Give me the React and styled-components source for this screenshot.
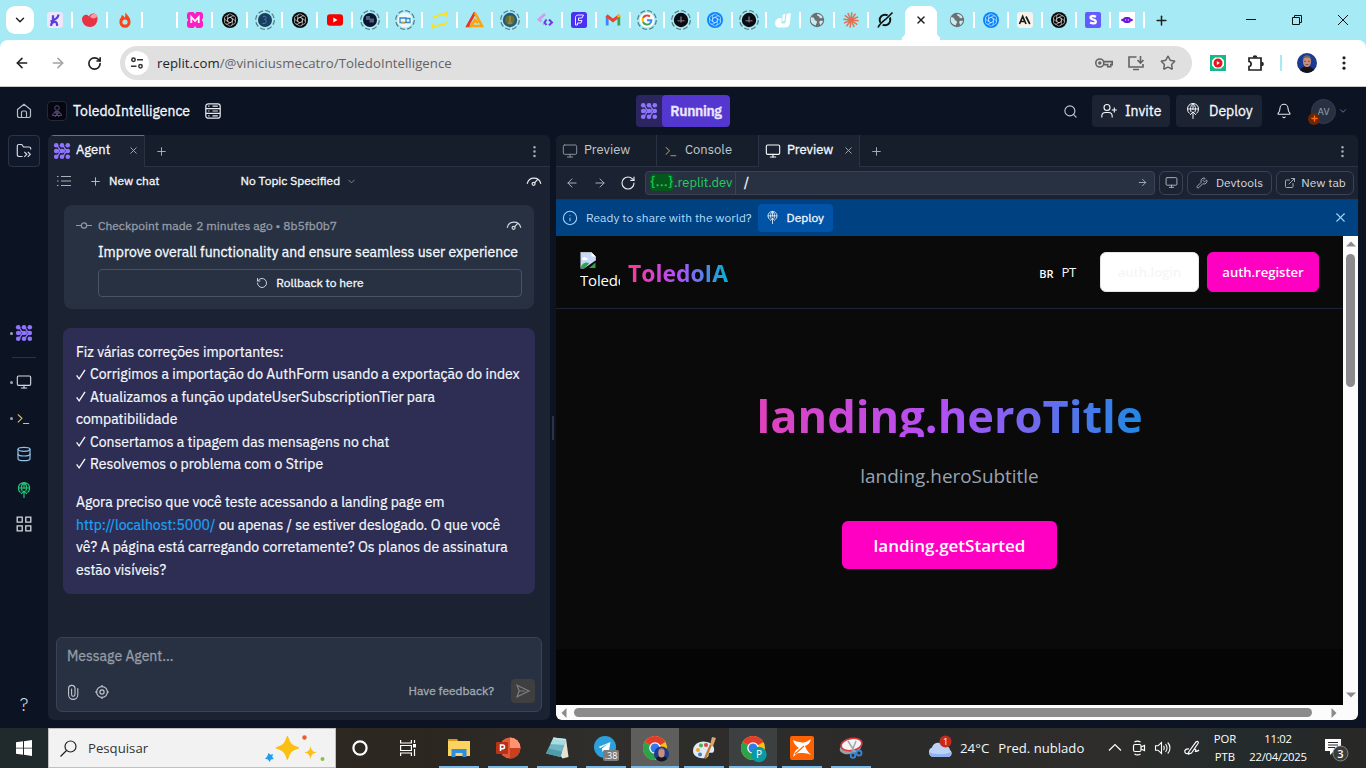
import React from "react";
import styled, { createGlobalStyle, css } from "styled-components";
import {
  ArrowLeft, ArrowRight, RotateCw, RotateCcw, Bell, Search, Monitor, Plus, X, ChevronDown,
  Wrench, ExternalLink, Info, EllipsisVertical, Star, Database,
} from "lucide-react";

const Global = createGlobalStyle`
  * { box-sizing: border-box; }
  body { margin: 0; background: #0c1424; }
  button { font: inherit; color: inherit; border: 0; background: none; padding: 0; margin: 0; }
`;

const plex = css`font-family: "IBM Plex Sans", Roboto, sans-serif;`;
const segoe = css`font-family: "Open Sans", "Noto Sans", sans-serif;`;

const Screen = styled.div`
  width: 1366px; height: 768px; display: flex; flex-direction: column; overflow: hidden;
  background: #0c1424; ${segoe}
`;
const Text = styled.span`
  font-size: ${p => p.$size || 14}px; font-weight: ${p => p.$weight || 400};
  color: ${p => p.$color || "#f5f9fc"}; letter-spacing: ${p => p.$ls || 0}px; white-space: pre;
  ${p => p.$firm && css`-webkit-text-stroke: 0.3px currentColor;`}
`;
const Cell = styled.div`
  flex: none; display: flex; align-items: center; justify-content: center;
  width: ${p => p.$w}px; height: ${p => p.$h || p.$w}px; color: ${p => p.$color || "inherit"};
`;
const Gap = styled.div`flex: none; width: ${p => p.$w}px;`;
const Spacer = styled.div`flex: 1;`;

/* ---------- browser tab strip ---------- */
const TabStrip = styled.header`
  height: 40px; flex: none; display: flex; align-items: center; background: #a5eaf5; padding-left: 6px;
`;
const TabSearch = styled.button`
  width: 28px; height: 28px; margin-right: 4px; border-radius: 9px; background: #fff;
  display: flex; align-items: center; justify-content: center;
`;
const Tab = styled.div`
  width: ${p => p.$w || 34}px; height: 16px; display: flex; align-items: center; justify-content: center; flex: none;
  border-right: 2px solid ${p => (p.$last ? "transparent" : "#fff")};
`;
const ActiveTab = styled.div`
  width: 38px; height: 34px; align-self: flex-end; display: flex; justify-content: center; align-items: flex-start;
  padding-top: 6px; flex: none; margin-left: -1px; margin-right: 1px;
  background:
    radial-gradient(circle at 0 0, transparent 9.5px, #fff 10px) -6px 100% / 10px 10px no-repeat,
    radial-gradient(circle at 100% 0, transparent 9.5px, #fff 10px) calc(100% + 6px) 100% / 10px 10px no-repeat,
    linear-gradient(#fff, #fff) 50% 10px / 32px 24px no-repeat,
    linear-gradient(#fff, #fff) 50% 0 / 14px 12px no-repeat,
    radial-gradient(circle at 12px 9px, #fff 9px, transparent 9.5px),
    radial-gradient(circle at 26px 9px, #fff 9px, transparent 9.5px);
`;
const Favicon = styled.svg.attrs({ viewBox: "0 0 20 20", fill: "none" })`
  width: 20px; height: 20px; flex: none; display: block; overflow: visible;
`;

const Knot = ({ bg }) => (
  <Favicon>
    <circle cx="10" cy="10" r="8" fill={bg} />
    <g stroke="#fff" strokeWidth=".65" opacity=".8">
      {[0, 60, 120, 180, 240, 300].map(a => (
        <path key={a} transform={`rotate(${a} 10 10)`} d="M7.6 8.6v-2.4a2.4 2.4 0 0 1 4.2-1.4L14 6.2M10 7.2l2.4 1.4v2.8" />
      ))}
    </g>
  </Favicon>
);
const Ring = ({ children }) => (
  <Favicon>
    <circle cx="10" cy="10" r="9.3" stroke="#5c7a80" strokeWidth="1.2" strokeDasharray="5 2.3" />
    {children}
  </Favicon>
);
const Globe = () => (
  <Favicon>
    <circle cx="10" cy="10" r="7.2" fill="#6b6f72" />
    <path d="M4 7.4c2.3-.2 3.4.7 3.6 2.2.1 1.2 2 1 2.4 2.2.3 1.1-1 1.8-1.3 3.6-2.9-.6-5-2.8-5.1-5.6zM10.2 4c-.5 1.6.5 2 1.6 2.2.8.2.4 1.5 1.3 1.9 1 .4 1.7.1 2.5-.6-1-2.2-2.9-3.4-5.4-3.5zM12.5 11.2c1-.6 2.2-.5 3.6-.1-.5 1.7-1.5 3-2.9 3.9-.4-1.4-1.4-2.8-.7-3.8z" fill="#c4edf3" />
  </Favicon>
);
const DarkCross = () => (
  <Ring>
    <circle cx="10" cy="10" r="7.2" fill="#0b0b12" />
    <path d="M10 6.500v6" stroke="#a9acb9" strokeWidth=".9" /><path d="M6.500 10.800h3.500" stroke="#5c7fc0" strokeWidth="1.1" /><path d="M10 10.800h3.500" stroke="#b8605c" strokeWidth="1.1" />
  </Ring>
);

const favicons = [
  <Favicon key="k"><rect x="2" y="2" width="16" height="16" rx="3" fill="#eee6fb" /><path d="M8 5.2v4.300M13.500 4.500c-.3 4-3.500 5.500-8 7M6 15.800c.3-3.300 2.500-4.300 4.800-3.800.9.300 1.200 1.800 1.400 3.800" stroke="#5b3fd6" strokeWidth="2.3" /></Favicon>,
  <Favicon key="h"><path d="M10 17C5 17 2 13 2 9c0-4 5-6 7-2.500C11 1.500 18 3 17.500 9c-.3 5-3.500 8-7.500 8z" fill="#e93345" /><path d="M10 7c1.500-4 6-4.500 7.500-1-2 3-5 3-7.500 1z" fill="#f79aa2" /></Favicon>,
  <Favicon key="f"><path d="M10 2c1 2.500 5.500 4.500 5.500 9.500A5.500 5.500 0 0 1 10 17.800a5.500 5.500 0 0 1-5.500-6.300C4.500 8 7 7.500 6.500 5c2 .5 3 1.500 3 3C10.500 6.500 10.500 4 10 2z" fill="#fa4616" /><circle cx="10" cy="12" r="2.6" fill="#a5eaf5" /></Favicon>,
  <Favicon key="b" />,
  <Favicon key="m"><path d="M5 2h3.500L10 4l1.500-2H15a3 3 0 0 1 3 3v3l-1.200 2L18 12v3a3 3 0 0 1-3 3h-3.500L10 16l-1.500 2H5a3 3 0 0 1-3-3v-3l1.200-2L2 8V5a3 3 0 0 1 3-3z" fill="#fb1fc3" /><path d="M6.300 13V7l3.700 4 3.700-4v6" stroke="#fff" strokeWidth="1.8" /></Favicon>,
  <Knot key="g1" bg="#0a0a0a" />,
  <Ring key="r1"><circle cx="10" cy="10" r="7" fill="#163f62" /><path d="M8 6.500c4-1 4 2.500 1.500 3 3 .5 2.500 5-2 4" stroke="#4c8199" /></Ring>,
  <Knot key="g2" bg="#0a0a0a" />,
  <Favicon key="y"><rect x="2" y="4.2" width="16" height="11.6" rx="3" fill="#f60000" /><path d="M8.300 7.500v5l4.200-2.500z" fill="#fff" /></Favicon>,
  <Ring key="r2"><circle cx="10" cy="10" r="7" fill="#0a1630" /><path d="M6 6h4v4H6zM9.500 8.500h4.500v4H9.500z" fill="#4d607e" /></Ring>,
  <Ring key="r3"><circle cx="10" cy="10" r="7.6" fill="#eef8fb" /><path d="M5 8h6v4.500H5zM11 8.500h4v4h-4" stroke="#3187bd" strokeWidth="1.3" /><path d="M6 13h4" stroke="#f0a33b" strokeWidth="1.5" /></Ring>,
  <Favicon key="ye"><path d="M3 8.500C6 4.500 10 6 17 2.800v4M17 12.500c-3 3-8 1.500-14 4.700v-3.500" stroke="#ffe11a" strokeWidth="1.9" /></Favicon>,
  <Favicon key="t"><path d="M10 2.500 2.500 16h4" stroke="#e5352b" strokeWidth="2.6" /><path d="M10 3l7 13H6l4-6 3 3" stroke="#fca40b" strokeWidth="2.6" /></Favicon>,
  <Ring key="r4"><circle cx="10" cy="10" r="7.2" fill="#24577e" /><circle cx="10" cy="10" r="4.8" fill="#69702f" /><path d="M10 6v7M8 13h4" stroke="#8f8440" strokeWidth="2" /></Ring>,
  <Favicon key="dv"><path d="M10 4 4 9.500l2.500 2" stroke="#cf9bf5" strokeWidth="2.8" /><path d="M10 12.500l-2 2" stroke="#cf9bf5" strokeWidth="2" /><path d="M11.500 9.500 9.500 12.500l2 2.500M14 9.500l3 3-3 2.800" stroke="#6e3be0" strokeWidth="2" /></Favicon>,
  <Favicon key="F"><rect x="2" y="2" width="16" height="16" rx="2.5" fill="#4a30f2" /><path d="M6.500 15V7.500C6.500 6 7.500 5 9 5h5.500L13 8H9.500v2.500H13L12 13H8.500v2z" stroke="#fff" strokeWidth=".9" /></Favicon>,
  <Favicon key="gm"><path d="M4.200 15.500V6" stroke="#4285f4" strokeWidth="2.8" /><path d="M15.800 15.500V6" stroke="#34a853" strokeWidth="2.8" /><path d="M3.500 5.500 10 10.500l6.500-5" stroke="#ea4335" strokeWidth="3" /><path d="M14.400 7.800V5.200c2-1.500 3-.5 3 .4v1.200z" fill="#fbbc04" /></Favicon>,
  <Ring key="G"><circle cx="10" cy="10" r="7.5" fill="#fff" /><g strokeWidth="2"><path d="M13 6.500A4.500 4.500 0 0 0 6 8" stroke="#ea4335" /><path d="M6 8a4.500 4.500 0 0 0 0 4" stroke="#fbbc04" /><path d="M6 12a4.500 4.500 0 0 0 7 1.500" stroke="#34a853" /><path d="M13 13.500c1-1 1.500-2 1.400-3.300H10" stroke="#4285f4" /></g></Ring>,
  <DarkCross key="d1" />,
  <Knot key="g3" bg="#0a84ff" />,
  <DarkCross key="d2" />,
  <Favicon key="v"><path d="M2.500 10.500 5.500 8h3v5.500h2c1.500 0 2-.6 2.200-2L13.500 4l4.300-1-.8 9.500c-.4 3.500-2 5-5 5H6c-3 0-4.500-2-3.500-7z" fill="#fff" /><path d="m9.500 5 2.800-1.500-.8 7-2 1z" fill="#fff" /></Favicon>,
  <Globe key="gl" />,
  <Favicon key="c"><g stroke="#e0704f" strokeWidth="1.5">{[...Array(12)].map((_, i) => <path key={i} d="M10 10V2.300" transform={`rotate(${i * 30 + 6} 10 10)`} />)}</g></Favicon>,
  <Favicon key="x"><circle cx="10" cy="10" r="5.3" stroke="#111" strokeWidth="1.9" /><path d="M3 17.500 17.500 2.500" stroke="#a5eaf5" strokeWidth="3" /><path d="M3 17.500c2-4 5-6 8.500-9l6-6" stroke="#111" strokeWidth="1.6" /></Favicon>,
];
const laterFavicons = [
  <Globe key="g" />,
  <Knot key="k" bg="#0a84ff" />,
  <Favicon key="a"><rect x="2" y="2" width="16" height="16" rx="3" fill="#f5f3ec" /><path d="M4.500 14 7.700 6.500 11 14M5.500 11.500h4M11 6.500l3.800 7.500" stroke="#1b1b19" strokeWidth="1.7" /></Favicon>,
  <Knot key="k2" bg="#0a0a0a" />,
  <Favicon key="s"><rect x="2" y="2" width="16" height="16" rx="2" fill="#635bff" /><path d="M13 6.800c-2.500-1.300-5.500-1-5.500.7 0 2.500 5.300 1.500 5.300 4.200 0 2-3 2.300-5.800.8" stroke="#fff" strokeWidth="2.3" /></Favicon>,
  <Favicon key="p"><rect x="2" y="2" width="16" height="16" fill="#fff" /><rect x="6" y="7" width="8" height="6" rx="3" fill="#6a18d8" /><circle cx="5.5" cy="10" r="1.3" fill="#6a18d8" /><circle cx="14.5" cy="10" r="1.3" fill="#6a18d8" /><path d="M8.700 9.300v1.400M11.300 9.300v1.400" stroke="#fff" strokeWidth=".8" /></Favicon>,
];

/* ---------- browser toolbar ---------- */
const ToolbarBack = styled.div`background: #a5eaf5; height: 47px; flex: none;`;
const Toolbar = styled.div`
  height: 47px; background: #fff; border-radius: 8px 8px 0 0; border-bottom: 1px solid #c9c9c9;
  display: flex; align-items: center; padding-left: 4px; color: #1f1f1f;
`;
const Omnibox = styled.div`
  width: 1072px; height: 34px; margin-left: 8px; border-radius: 17px; background: #e0e0e0;
  display: flex; align-items: center; padding: 0 8px 0 5px; color: #5f6368;
`;
const SiteInfo = styled.div`
  width: 24px; height: 24px; border-radius: 50%; background: #fff; margin-right: 8px;
  display: flex; align-items: center; justify-content: center;
`;
const Divider = styled.div`width: 2px; height: 16px; background: #a5eaf5; margin: 0 15px 0 14px;`;
const Face = styled.svg.attrs({ viewBox: "0 0 20 20" })`
  width: ${p => p.$s || 20}px; height: ${p => p.$s || 20}px; border-radius: 50%; display: block;
`;
const Portrait = ({ s }) => (
  <Face $s={s}>
    <rect width="20" height="20" fill="#1b3a92" />
    <path d="M2.500 20c0-5 3-6.500 7.500-6.500s7.500 1.500 7.500 6.500z" fill="#151518" />
    <ellipse cx="10" cy="8.5" rx="4" ry="5.6" fill="#c98f7c" />
    <path d="M5.600 7.500C5.700 3.300 8 2.200 10 2.200s4.300 1.100 4.400 5.300L13.300 5.200 10 4.500l-3.300.7z" fill="#6f6665" />
    <path d="M7 8.300h2M11 8.300h2M8.500 11.600h3" stroke="#6b3f38" strokeWidth=".8" />
  </Face>
);

/* ---------- IDE header ---------- */
const IdeHeader = styled.div`
  height: 48px; flex: none; display: flex; align-items: center; padding: 0 18px 0 12px; ${plex}
  color: #f5f9fc;
`;
const ProjectLogo = styled.div`
  width: 20px; height: 20px; border-radius: 4px; background: #060610; border: 1px solid #23283a; margin: 0 6px 0 11px;
  display: flex; align-items: center; justify-content: center;
`;
const ProjectName = styled.div`width: 132px; flex: none; display: flex;`;
const RunState = styled.div`
  display: flex; width: 94px; height: 32px; border-radius: 4px; background: #2b2660; overflow: hidden; margin-left: 415px;
`;
const RunLabel = styled.div`
  width: 68px; border-radius: 4px; background: #5437cf; display: flex; align-items: center; justify-content: center;
`;
const HeaderButton = styled.button`
  width: ${p => p.$w}px; height: 32px; border-radius: 4px; background: #1c2333; margin-right: 6px;
  display: flex; align-items: center; gap: 8px; padding-left: 9px;
`;
const UserBadge = styled.div`
  position: relative; width: 25px; height: 25px; border-radius: 50%; background: #283142; border: 1px solid #343d50;
  display: flex; align-items: center; justify-content: center; margin: 0 2px 0 11px;
`;
const BadgePlus = styled.div`
  position: absolute; left: -4px; bottom: -2px; width: 12px; height: 12px; border-radius: 50%; background: #6b2606;
  display: flex; align-items: center; justify-content: center; color: #ff6a14;
`;

/* ---------- IDE body ---------- */
const Body = styled.div`flex: 1; min-height: 0; display: flex; padding-bottom: 8px; ${plex}`;
const Rail = styled.nav`
  width: 48px; display: flex; flex-direction: column; align-items: center; color: #d3d9df;
`;
const RailButton = styled.button`
  width: 32px; height: 32px; border: 1px solid #2b3445; border-radius: 4px; display: flex; align-items: center;
  justify-content: center; background: #10192a; margin-bottom: 150px;
`;
const RailItem = styled.div`
  width: 48px; height: 32px; display: flex; align-items: center; color: ${p => p.$color || "#d3d9df"};
  padding-left: 9.5px; margin-top: ${p => p.$top || 0}px;
  &::before {
    content: ""; width: 3px; height: 3px; border-radius: 50%; margin-right: 3px;
    background: ${p => (p.$open ? "#9aa3ad" : "transparent")};
  }
`;
const RailLine = styled.div`width: 24px; height: 1px; background: #2b3445; margin-top: 8px;`;
const Panel = styled.section`
  width: ${p => p.$w}px; background: #1b2332; border-radius: 6px; overflow: hidden; display: flex; flex-direction: column;
`;
const Gutter = styled.div`
  width: 6px; display: flex; align-items: center; justify-content: center;
  &::after { content: ""; width: 2px; height: 24px; background: #2b3445; }
`;
const PaneTabs = styled.div`
  height: 32px; flex: none; display: flex; background: #161e2b; box-shadow: inset 0 -1px #2a3343; color: #a9b0b8;
`;
const PaneTab = styled.div`
  width: ${p => p.$w}px; display: flex; align-items: center; gap: 6px; padding-left: 6px;
  border-right: 1px solid #2a3343; background: ${p => (p.$active ? "#1b2332" : "transparent")};
  color: ${p => (p.$active ? "#f5f9fc" : "#c2c8cc")};
  ${p => p.$focused && css`box-shadow: inset 0 1px #0f87ff;`}
  & > span { margin-bottom: 3px; }
  & > svg:last-child { margin: 0 5px 2px auto; color: #a9b0b8; }
`;

const ChatBar = styled.div`
  height: 29px; flex: none; display: flex; align-items: center; padding: 0 8px 1px; color: #e6eaee;
  & > span { margin-bottom: 1px; }
`;
const Checkpoint = styled.article`
  margin: 9px 16px 0; height: 104px; flex: none; border-radius: 8px; background: #283142; padding: 10px 12px 0;
  display: flex; flex-direction: column; color: #d3d9df;
`;
const CheckpointHead = styled.div`display: flex; align-items: center; height: 20px;`;
const CheckpointTitle = styled.div`padding-left: 22px; height: 34px; line-height: 33px;`;
const Rollback = styled.button`
  margin-left: 22px; width: 424px; height: 28px; border: 1px solid #4a5364; border-radius: 4px;
  display: flex; align-items: center; justify-content: center; gap: 8px; padding-bottom: 1px;
`;
const Message = styled.article`
  margin: 19px 15px 0; height: 266px; flex: none; border-radius: 8px; background: #2e2e55; padding: 13px;
  font-size: 14px; line-height: 22.4px; color: #f5f9fc; -webkit-text-stroke: 0.2px currentColor;
`;
const Paragraph = styled.div`margin-bottom: 16px;`;
const Line = styled.div`white-space: pre; height: 22.4px; display: flex; align-items: center;`;
const Check = styled.svg.attrs({ viewBox: "0 0 14 14", fill: "none" })`width: 11px; height: 13px; margin: 0 3px 1px 0; flex: none;`;
const Link = styled.a`color: #1aa3f5;`;
const Composer = styled.div`
  margin: auto 8px 8px; height: 75px; border: 1px solid #3a4356; border-radius: 6px; background: #283142;
  display: flex; flex-direction: column; padding: 9px 6px 8px 10px;
`;
const ComposerTools = styled.div`
  display: flex; align-items: center; margin-top: auto; color: #c2c8cc;
  & > span { margin-bottom: 2px; }
  & > svg { margin-top: 2px; }
`;
const Send = styled.button`
  width: 24px; height: 24px; border-radius: 4px; background: #3f3f40; margin-left: 17px; color: #7d7f82;
  display: flex; align-items: center; justify-content: center;
`;

const AddressRow = styled.div`
  height: 33px; flex: none; display: flex; align-items: center; padding: 0 4px 1px 2px; color: #a9b0b8;
  border-bottom: 1px solid #2a3343;
`;
const Address = styled.div`
  width: 511px; height: 24px; margin-left: 3px; border: 1px solid #3a4356; border-radius: 4px; background: #283142;
  display: flex; align-items: center; padding-left: 4px;
`;
const HostChip = styled.span`
  background: #04581c; color: #1dd05f; border-radius: 4px; width: 24px; height: 17px; line-height: 16px; text-align: center;
  font-size: 13px; letter-spacing: 0.6px; -webkit-text-stroke: 0.3px currentColor;
`;
const Host = styled.span`
  color: #1dd05f; font-size: 13px; width: 62px; height: 22px; line-height: 21px;
  border-right: 1px solid #3a4356; margin-right: 8px;
`;
const SmallButton = styled.button`
  width: ${p => p.$w}px; height: 24px; border: 1px solid #3a4356; border-radius: 6px; margin-left: 4px; flex: none;
  display: flex; align-items: center; justify-content: center; gap: ${p => p.$gap || 5}px;
`;
const Banner = styled.div`
  height: 36px; flex: none; background: #004182; display: flex; align-items: center; padding: 0 10px 1px 6px; color: #9fd2fb;
`;
const BannerButton = styled.button`
  width: 75px; height: 28px; border-radius: 4px; background: #0053a6; margin-left: 6px; color: #f5f9fc;
  display: flex; align-items: center; gap: 8px; padding-left: 8px;
`;

/* ---------- previewed site ---------- */
const Viewport = styled.div`flex: 1; min-height: 0; display: flex; background: #fff; ${segoe}`;
const Page = styled.main`flex: 1; background: #050505; overflow: hidden;`;
const SiteNav = styled.div`
  height: 73px; background: #0a0a0a; border-bottom: 1px solid #1b2432; display: flex; align-items: center; padding: 0 24px;
`;
const BrokenImage = styled.div`
  width: 40px; height: 40px; overflow: hidden; color: #fff; font-size: 15px; line-height: 22px; letter-spacing: -0.2px;
  & > svg { display: block; }
`;
const Brand = styled.div`
  margin: 3px 0 0 8px; font-size: 22.9px; font-weight: 700; line-height: 32px;
  background: linear-gradient(90deg, #ff3796, #b250fb 50%, #00b2d6); background-clip: text; color: transparent;
`;
const Country = styled.span`color: #fff; font-size: 11px; font-weight: 600; margin: 3px 8px 0 0;`;
const AuthButton = styled.button`
  width: ${p => p.$w}px; height: 40px; border-radius: 6px; background: ${p => p.$bg}; color: ${p => p.$fg};
  font-size: 13px; font-weight: 600; margin-left: 8px; border: 1px solid ${p => p.$edge || p.$bg}; text-align: center;
`;
const Hero = styled.section`
  height: 340px; background: #0a0a0a; display: flex; flex-direction: column; align-items: center; padding-top: 80px;
`;
const HeroTitle = styled.h1`
  margin: 0; height: 48px; font-size: 45.2px; line-height: 53px; font-weight: 700;
  background: linear-gradient(90deg, #e042bb, #b250f6 48%, #2088e4); background-clip: text; color: transparent;
`;
const HeroText = styled.p`margin: 25px 0 30px; font-size: 18.9px; line-height: 29px; color: #99a3b0;`;
const HeroButton = styled.button`
  width: 215px; height: 48px; border-radius: 6px; background: #ff00c3; color: #fff; font-size: 17px; font-weight: 600;
`;
const VBar = styled.div`width: 15px; display: flex; flex-direction: column; align-items: center; background: #fcfcfc;`;
const HBar = styled.div`height: 15px; flex: none; display: flex; align-items: center; background: #fcfcfc;`;
const Thumb = styled.div`width: ${p => p.$w}px; height: ${p => p.$h}px; border-radius: 5px; background: #8b8b8b;`;
const Arrow = styled.svg.attrs({ viewBox: "0 0 10 10" })`
  width: 10px; height: 10px; flex: none; fill: #8b8b8b; transform: rotate(${p => p.$r || 0}deg); margin: ${p => p.$m || 0};
`;

/* ---------- taskbar ---------- */
const Taskbar = styled.footer`
  height: 40px; flex: none; display: flex; align-items: center; color: #fff;
  background: linear-gradient(90deg, #20292b 0, #20292b 60px, #2d2820 340px, #2c2620 430px, #2f2e2b 600px, #2b2b2a 900px, #2e2d2a 1100px, #232b2c 1250px, #292826);
`;
const SearchBox = styled.div`
  width: 288px; height: 40px; background: #f2f2f2; border: 1px solid #bfbfbf; display: flex; align-items: center; padding-left: 11px;
`;
const TaskItem = styled.div`
  width: 48px; height: 40px; margin-right: 1px; display: flex; flex-direction: column; align-items: center; flex: none;
  background: ${p => p.$bg || "transparent"};
`;
const Underline = styled.div`width: ${p => (p.$wide ? 48 : 40)}px; height: 2px; background: #76b9ed;`;
const IconArea = styled.div`flex: 1; display: flex; align-items: center; padding-top: 2px;`;
const Glyph = styled.svg.attrs(p => ({ viewBox: p.viewBox || "0 0 24 24", fill: "none" }))`
  width: ${p => p.$s || 24}px; height: ${p => p.$s || 24}px; display: block; flex: none; overflow: visible;
`;
const Stack = styled.div`
  display: flex; flex-direction: column; align-items: center; width: ${p => p.$w}px; font-size: 11.3px; line-height: 18px;
  letter-spacing: ${p => p.$ls || 0}px;
`;

const AgentMark = ({ s = 16 }) => (
  <Glyph $s={s} viewBox="0 0 16 16">
    <g fill="#8f74ff">
      {[2.2, 8, 13.8].flatMap(x => [2.2, 8, 13.8].map(y => <circle key={`${x}-${y}`} cx={x} cy={y} r="2.3" />))}
    </g>
    <path d="M2.200 2.200C5 3.500 4.500 7 8 8c-3.500 1-3 4.500-5.800 5.800M8 2.200c2.800 1.300 2.300 4.800 5.800 5.800-3.500 1-3 4.500-5.800 5.800M2.200 8c2 0 3-1 4-2M2.200 8c2 0 3 1 4 2M8 8c2 0 3-1 4-2M8 8c2 0 3 1 4 2" stroke="#8f74ff" strokeWidth="1.3" />
  </Glyph>
);
const GaugeMark = ({ s = 16 }) => (
  <Glyph $s={s} viewBox="0 0 16 16" stroke="currentColor" strokeWidth="1.2" strokeLinecap="round">
    <path d="M1.300 10.300a6.900 6.900 0 0 1 13.400 0" /><circle cx="7.600" cy="10.800" r="1.500" /><path d="m8.700 9.600 2.800-3" />
  </Glyph>
);
const DeployMark = ({ s = 16, w = 1 }) => (
  <Glyph $s={s} viewBox="0 0 16 16" stroke="currentColor" strokeWidth={w} strokeLinecap="round">
    <path d="M4.200 10.200a5.600 5.600 0 1 1 7.600 0M2.500 6h11M6 8.800c-1-3-.6-6.300 2-8.200 2.600 1.900 3 5.200 2 8.200M8 .6v5.900M8 15.500V9M5.300 11.600 8 9l2.700 2.600" />
  </Glyph>
);
const ConsoleMark = ({ s = 16 }) => (
  <Glyph $s={s} viewBox="0 0 16 16" stroke="currentColor" strokeWidth="1.2"><path d="m2 3.500 4.300 4.300L2 12.100M7.500 13.300H14" /></Glyph>
);
const ChromeMark = ({ children }) => (
  <Glyph viewBox="0 0 24 24">
    <circle cx="12" cy="12" r="12" fill="#fbc116" />
    <path d="M12 12 1.600 6A12 12 0 0 1 22.400 6z" fill="#e33b2e" />
    <path d="M12 12 1.600 6A12 12 0 0 0 12 24l5.200-9z" fill="#2ba24c" />
    <circle cx="12" cy="12" r="5.800" fill="#fff" /><circle cx="12" cy="12" r="4.500" fill="#3279ea" />
    {children}
  </Glyph>
);
const Tick = () => <Check><path d="M.8 8.200 4 12.500 11.500 1" stroke="#f5f9fc" strokeWidth="1.7" /></Check>;

function BrowserChrome() {
  return (
    <>
      <TabStrip>
        <TabSearch><ChevronDown size={14} strokeWidth={2.5} color="#222" /></TabSearch>
        {favicons.map((icon, i) => <Tab key={i} $w={i < 15 ? 35 : 34} $last={i === 24}>{icon}</Tab>)}
        <ActiveTab><Cell $w={16}><X size={12} strokeWidth={3} color="#222" /></Cell></ActiveTab>
        {laterFavicons.map((icon, i) => <Tab key={i}>{icon}</Tab>)}
        <Cell $w={32}><Plus size={15} strokeWidth={2.4} color="#222" /></Cell>
        <Spacer />
        <Cell $w={46} $h={40}><Glyph $s={10} viewBox="0 0 10 10" stroke="#111"><path d="M0 4.500h10" /></Glyph></Cell>
        <Cell $w={46} $h={40}><Glyph $s={10} viewBox="0 0 10 10" stroke="#111"><path d="M.5 2.500h7v7h-7zM2.500 2.500v-2h7v7h-2" /></Glyph></Cell>
        <Cell $w={46} $h={40}><Glyph $s={10} viewBox="0 0 10 10" stroke="#111"><path d="m0 0 10 10M10 0 0 10" /></Glyph></Cell>
      </TabStrip>
      <ToolbarBack>
        <Toolbar>
          <Cell $w={36}><ArrowLeft size={16} strokeWidth={2.3} /></Cell>
          <Cell $w={36} $color="#a3a3a3"><ArrowRight size={16} strokeWidth={2.3} /></Cell>
          <Cell $w={36}><RotateCw size={15} strokeWidth={2.6} /></Cell>
          <Omnibox>
            <SiteInfo>
              <Glyph $s={14} viewBox="0 0 14 14" stroke="#333" strokeWidth="1.5"><circle cx="3.5" cy="3.8" r="1.7" /><path d="M7 3.800h6M1 10.200h5.500" /><circle cx="10.5" cy="10.2" r="1.7" /></Glyph>
            </SiteInfo>
            <Text $size={13.2} $color="#1f1f1f" $ls={0.05}>replit.com</Text>
            <Text $size={13.2} $color="#5f6368" $ls={0.05}>/@viniciusmecatro/ToledoIntelligence</Text>
            <Spacer />
            <Cell $w={32}><Glyph $s={18} viewBox="0 0 18 18" stroke="currentColor" strokeWidth="1.6"><circle cx="4.8" cy="9" r="4" /><circle cx="4.8" cy="9" r=".9" fill="currentColor" /><path d="M8.800 7.600h8.400v3h-1.500v2.200h-3v-2.200H8.700" /></Glyph></Cell>
            <Cell $w={32}><Glyph $s={16} viewBox="0 0 16 16" stroke="currentColor" strokeWidth="1.6"><path d="M8.500 2H1v10h14V9M12.500 1v6.500M9.500 5l3 3 3-3M5 14.500h6" /></Glyph></Cell>
            <Cell $w={32}><Star size={16} strokeWidth={2.2} /></Cell>
          </Omnibox>
          <Cell $w={52} $h={36}><Favicon><rect x="2" y="2" width="16" height="16" fill="#14b88c" /><path d="M7 4.500h6l3 3v5l-3 3H7l-3-3v-5z" fill="#fff" /><circle cx="10" cy="10" r="4.5" fill="#e5141d" /><path d="M8.800 8v4l3-2z" fill="#fff" /></Favicon></Cell>
          <Cell $w={22}><Glyph $s={17} viewBox="0 0 17 17" stroke="#222" strokeWidth="1.7"><path d="M2 3h12v12H2v-3.500c2.800 0 2.800-5 0-5z" /><path d="M6.500 2.500c0-2 3-2 3 0M14.500 7.500c2 0 2 3 0 3" fill="#222" /></Glyph></Cell>
          <Divider />
          <Portrait s={20} />
          <Spacer />
          <Cell $w={24}><Glyph $s={14} viewBox="0 0 14 14"><circle cx="7" cy="1.8" r="1.6" fill="#222" /><circle cx="7" cy="7" r="1.6" fill="#222" /><circle cx="7" cy="12.2" r="1.6" fill="#222" /></Glyph></Cell>
          <Gap $w={10} />
        </Toolbar>
      </ToolbarBack>
    </>
  );
}

function Header() {
  return (
    <IdeHeader>
      <Cell $w={24} $color="#b8bec6"><Glyph $s={16} viewBox="0 0 16 16" stroke="currentColor" strokeWidth="1.2"><path d="M1.500 6.500 8 1.200l6.500 5.300v6.300c0 1-.5 1.700-1.700 1.700H3.200c-1.200 0-1.700-.7-1.700-1.700zM5.500 14V9.500c0-1 .5-1.500 1.500-1.500h2c1 0 1.500.5 1.500 1.500V14" /></Glyph></Cell>
      <ProjectLogo><Glyph $s={14} viewBox="0 0 14 14" stroke="#584a78"><circle cx="7" cy="4" r="2.3" /><path d="M2.500 12c0-6 9-6 9 0M4 9h6M3 11.500h8M5 7l4 6M9 7l-4 6" /></Glyph></ProjectLogo>
      <ProjectName><Text $firm>ToledoIntelligence</Text></ProjectName>
      <Glyph $s={16} viewBox="0 0 16 16" stroke="#e6eaee" strokeWidth="1.2"><rect x=".8" y=".8" width="14.4" height="14.4" rx="2.5" /><path d="M.8 5.600h14.400M.8 10.400h14.400M3.200 3.200h1.300M3.200 8h1.300M3.200 12.800h1.300M7.500 3.200h5.300M7.500 8h5.300M7.500 12.800h5.300" /></Glyph>
      <RunState>
        <Cell $w={26} $h={32}><AgentMark /></Cell>
        <RunLabel><Text $weight={600} $color="#ebe6ff" $ls={-0.35} $firm>Running</Text></RunLabel>
      </RunState>
      <Spacer />
      <Cell $w={32} $color="#c2c8cc"><Search size={15} strokeWidth={1.8} /></Cell>
      <Gap $w={6} />
      <HeaderButton $w={78}>
        <Glyph $s={16} viewBox="0 0 16 16" stroke="currentColor" strokeWidth="1.1"><circle cx="6" cy="4.5" r="3" /><path d="M.8 14.500v-1.300c0-2.300 1.500-3.700 3.700-3.700h3c2.200 0 3.700 1.400 3.700 3.700v1.300M13.300 4.500v5M10.800 7h5" /></Glyph>
        <Text $firm>Invite</Text>
      </HeaderButton>
      <HeaderButton $w={86}><DeployMark /><Text $firm>Deploy</Text></HeaderButton>
      <Cell $w={32} $color="#e6eaee"><Bell size={16} strokeWidth={1.6} /></Cell>
      <UserBadge>
        <Text $size={10} $color="#9aa3ad">AV</Text>
        <BadgePlus><Plus size={9} strokeWidth={3.5} /></BadgePlus>
      </UserBadge>
      <ChevronDown size={10} strokeWidth={2} color="#7d8590" />
    </IdeHeader>
  );
}

function Sidebar() {
  return (
    <Rail>
      <RailButton><Glyph $s={16} viewBox="0 0 16 16" stroke="currentColor" strokeWidth="1.2"><path d="M6.500 13.500H3c-1 0-1.700-.6-1.700-1.700V3c0-1 .7-1.500 1.500-1.500h3L7.500 4H13c1 0 1.700.6 1.700 1.500v1M8.300 8.800 10.800 11.300l-2.500 2.500M11.800 8.800l2.500 2.500-2.500 2.500" /></Glyph></RailButton>
      <RailItem $open><AgentMark /></RailItem>
      <RailLine />
      <RailItem $open $top={8}><Monitor size={16} strokeWidth={1.7} /></RailItem>
      <RailItem $open $color="#e0c268" $top={4}><ConsoleMark s={15} /></RailItem>
      <RailItem $color="#8ec0ea" $top={4}><Database size={16} strokeWidth={1.8} /></RailItem>
      <RailItem $color="#23c877" $top={4}><DeployMark w={1.2} /></RailItem>
      <RailItem $top={2}><Glyph $s={16} viewBox="0 0 16 16" stroke="currentColor" strokeWidth="1.3"><path d="M1.200 1.200h5v5h-5zM9.800 1.200h5v5h-5zM1.200 9.800h5v5h-5zM9.800 9.800h5v5h-5z" /></Glyph></RailItem>
      <Spacer />
      <Cell $w={32}><Text $size={18} $weight={300} $color="#d3d9df">?</Text></Cell>
    </Rail>
  );
}

function AgentPanel() {
  return (
    <Panel $w={502}>
      <PaneTabs>
        <PaneTab $w={97} $active $focused><AgentMark /><Text $size={13} $firm>Agent</Text><X size={11} strokeWidth={2} /></PaneTab>
        <Cell $w={32}><Plus size={13} strokeWidth={1.8} /></Cell>
        <Spacer />
        <Cell $w={32}><EllipsisVertical size={15} /></Cell>
      </PaneTabs>
      <ChatBar>
        <Glyph $s={16} viewBox="0 0 16 16" stroke="#a9b0b8" strokeWidth="1.2"><path d="M1 3.500h1.500M1 8h1.500M1 12.500h1.500M5 3.500h10M5 8h10M5 12.500h10" /></Glyph>
        <Gap $w={9} />
        <Cell $w={28} $h={20}><Plus size={13} strokeWidth={1.8} color="#b8bec6" /></Cell>
        <Text $size={12} $firm>New chat</Text>
        <Gap $w={81} />
        <Text $size={12} $firm>No Topic Specified</Text>
        <Cell $w={22} $h={20}><ChevronDown size={11} strokeWidth={1.8} color="#8f98a2" /></Cell>
        <Spacer />
        <GaugeMark />
      </ChatBar>
      <Checkpoint>
        <CheckpointHead>
          <Cell $w={16} $color="#8f98a2"><Glyph $s={16} viewBox="0 0 16 16" stroke="currentColor" strokeWidth="1.2"><circle cx="8" cy="8.5" r="2.7" /><path d="M0 8.500h5.300M10.700 8.500H16" /></Glyph></Cell>
          <Gap $w={6} />
          <Text $size={12} $color="#969da6" $firm>Checkpoint made</Text>
          <Gap $w={4} />
          <Text $size={12} $color="#969da6" $ls={0.04} $firm>2 minutes ago • 8b5fb0b7</Text>
          <Spacer />
          <GaugeMark />
        </CheckpointHead>
        <CheckpointTitle><Text $firm>Improve overall functionality and ensure seamless user experience</Text></CheckpointTitle>
        <Rollback><RotateCcw size={12} strokeWidth={1.9} /><Text $size={12} $firm>Rollback to here</Text></Rollback>
      </Checkpoint>
      <Message>
        <Paragraph>
          <Line>Fiz várias correções importantes:</Line>
          <Line><Tick />Corrigimos a importação do AuthForm usando a exportação do index</Line>
          <Line><Tick />Atualizamos a função updateUserSubscriptionTier para</Line>
          <Line>compatibilidade</Line>
          <Line><Tick />Consertamos a tipagem das mensagens no chat</Line>
          <Line><Tick />Resolvemos o problema com o Stripe</Line>
        </Paragraph>
        <Paragraph>
          <Line>Agora preciso que você teste acessando a landing page em</Line>
          <Line><Link>http://localhost:5000/</Link> ou apenas / se estiver deslogado. O que você</Line>
          <Line>vê? A página está carregando corretamente? Os planos de assinatura</Line>
          <Line>estão visíveis?</Line>
        </Paragraph>
      </Message>
      <Composer>
        <Text $color="#969da6" $firm>Message Agent…</Text>
        <ComposerTools>
          <Glyph $s={14} viewBox="0 0 14 14" stroke="currentColor" strokeWidth="1.1" strokeLinecap="round"><path d="M10.800 3.500v6.300a4.600 4.600 0 0 1-9.200 0V3.600a3.200 3.200 0 0 1 6.400 0v6a1.700 1.700 0 0 1-3.400 0V4" /></Glyph>
          <Gap $w={14} />
          <Glyph $s={14} viewBox="0 0 14 14" stroke="currentColor" strokeWidth="1.2"><circle cx="7" cy="7" r="5.4" /><circle cx="7" cy="7" r="2.1" /><path d="M7 0v1.600M7 12.400V14M0 7h1.600M12.400 7H14" /></Glyph>
          <Spacer />
          <Text $size={12} $color="#a5acb4" $firm>Have feedback?</Text>
          <Send><Glyph $s={14} viewBox="0 0 14 14" stroke="currentColor" strokeWidth="1.2"><path d="M1 1.200 13 7 1 12.800 3.200 7zM3.200 7H9" /></Glyph></Send>
        </ComposerTools>
      </Composer>
    </Panel>
  );
}

function PreviewPanel() {
  return (
    <Panel $w={802}>
      <PaneTabs>
        <PaneTab $w={101}><Monitor size={16} strokeWidth={1.4} color="#8f98a2" /><Text $size={13} $color="#c2c8cc">Preview</Text></PaneTab>
        <PaneTab $w={102}><Cell $w={16} $color="#8a8068"><ConsoleMark s={14} /></Cell><Text $size={13} $color="#c2c8cc">Console</Text></PaneTab>
        <PaneTab $w={101} $active><Monitor size={16} strokeWidth={1.7} /><Text $size={13} $firm>Preview</Text><X size={11} strokeWidth={2} /></PaneTab>
        <Cell $w={32}><Plus size={13} strokeWidth={1.8} /></Cell>
        <Spacer />
        <Cell $w={32}><EllipsisVertical size={15} /></Cell>
      </PaneTabs>
      <AddressRow>
        <Cell $w={28}><ArrowLeft size={14} strokeWidth={1.7} /></Cell>
        <Cell $w={28}><ArrowRight size={14} strokeWidth={1.7} /></Cell>
        <Cell $w={28} $color="#e6eaee"><RotateCw size={16} strokeWidth={1.7} /></Cell>
        <Address>
          <HostChip>{"{...}"}</HostChip><Host>.replit.dev</Host><Text $size={13} $firm>/</Text><Spacer />
          <Cell $w={24} $h={20}><ArrowRight size={11} strokeWidth={2} /></Cell>
        </Address>
        <SmallButton $w={24}><Monitor size={13} strokeWidth={1.8} /></SmallButton>
        <SmallButton $w={85} $gap={8}><Wrench size={12} strokeWidth={1.9} /><Text $size={12} $color="#d3d9df">Devtools</Text></SmallButton>
        <SmallButton $w={78}><ExternalLink size={12} strokeWidth={1.9} /><Text $size={12} $color="#d3d9df">New tab</Text></SmallButton>
      </AddressRow>
      <Banner>
        <Info size={16} strokeWidth={1.6} />
        <Gap $w={8} />
        <Text $size={12} $color="#b4dcfb">Ready to share with the world?</Text>
        <BannerButton><DeployMark s={13} /><Text $size={12} $firm>Deploy</Text></BannerButton>
        <Spacer />
        <X size={15} strokeWidth={1.7} />
      </Banner>
      <Viewport>
        <Page>
          <SiteNav>
            <BrokenImage>
              <Glyph $s={17} viewBox="0 0 17 17"><path d="M.5.5h11l4 4v4L4 16.500H.5z" fill="#c6d9f7" /><path d="M.5.5h11l4 4v4" stroke="#b9bcc0" /><path d="M11.500.5v4h4z" fill="#fff" /><path d="M2 7c0-2 3-3 4-1 2-.5 2 2 1 2H2.500z" fill="#fff" /><path d="M1 14.500c2-4 6-5 8-3L5 16H1z" fill="#2aa745" /><path d="m9 16 6.500-5.500V16z" fill="#2aa745" /></Glyph>
              Toledo
            </BrokenImage>
            <Brand>ToledoIA</Brand>
            <Spacer />
            <Country>BR</Country>
            <Text $size={13.1} $ls={-0.25}>PT</Text>
            <Gap $w={16} />
            <AuthButton $w={99} $bg="#fff" $fg="#f5f6f8" $edge="#e3e5e8">auth.login</AuthButton>
            <AuthButton $w={112} $bg="#ff00c3" $fg="#fff">auth.register</AuthButton>
          </SiteNav>
          <Hero>
            <HeroTitle>landing.heroTitle</HeroTitle>
            <HeroText>landing.heroSubtitle</HeroText>
            <HeroButton>landing.getStarted</HeroButton>
          </Hero>
        </Page>
        <VBar>
          <Arrow $m="3px 0 5px"><path d="M5 2.500 10 7.500H0z" /></Arrow>
          <Thumb $w={9} $h={133} />
          <Spacer />
          <Arrow $r={180} $m="0 0 5px"><path d="M5 2.500 10 7.500H0z" /></Arrow>
        </VBar>
      </Viewport>
      <HBar>
        <Arrow $r={-90} $m="0 5px 0 3px"><path d="M5 2.500 10 7.500H0z" /></Arrow>
        <Thumb $w={738} $h={9} />
        <Arrow $r={90} $m="0 0 0 17px"><path d="M5 2.500 10 7.500H0z" /></Arrow>
      </HBar>
    </Panel>
  );
}

const apps = [
  { icon: <Glyph><path d="M1 3h9l2 3H1z" fill="#d99a17" /><path d="M1 5h22v15H1z" fill="#fbd35e" /><path d="M4.500 21v-8h15v8h-4v-4h-7v4z" fill="#2f8ee0" /></Glyph> },
  { icon: <Glyph><circle cx="14" cy="12" r="10.5" fill="#e2593a" /><path d="M14 1.500A10.500 10.500 0 0 1 24.500 12H14z" fill="#ff9471" /><path d="M14 12h10.500A10.500 10.500 0 0 1 14 22.500z" fill="#c9401f" /><rect x="0" y="6" width="12" height="12" rx="1" fill="#b93218" /><path d="M4.500 15V9h2.200a1.800 1.800 0 0 1 0 3.700H4.500" stroke="#fff" strokeWidth="1.5" /></Glyph> },
  { icon: <Glyph><path d="M21 2.500 23.500 21l-6 1.500-2-3z" fill="#e6e1d2" /><path d="M8.500 1.500 21 3l-5.500 18L1 17.500z" fill="#6fb6c4" /><path d="M8.500 1.500 21 3l-1.800 6L5.500 8z" fill="#a9dbe2" /><path d="M3.500 12.500 17 15.500l-1.500 5.500L1 17.500z" fill="#4f9cab" /><path d="M8.500 2.300 21 3.800" stroke="#dfeff1" strokeWidth="1.5" strokeDasharray="1 1" /></Glyph> },
  { icon: <Glyph><circle cx="11" cy="11" r="11" fill="#2ba1dc" /><path d="m4.500 11 12-5-2 11-4-3-2 2-.5-3.500 6-5-7.500 4.500z" fill="#fff" /><rect x="9" y="14" width="16" height="11" rx="2" fill="#7c7c7c" /><text x="17" y="23" fontSize="9" fill="#fff" textAnchor="middle" fontFamily="Open Sans, sans-serif">.38</text></Glyph> },
  { bg: "#5e5e5c", wide: true, icon: <ChromeMark><circle cx="18.500" cy="18" r="7.5" fill="#1b3a92" /><path d="M13 23c1-4 10-4 11 0a7.500 7.500 0 0 1-11 0z" fill="#17171b" /><ellipse cx="18.500" cy="17" rx="3.2" ry="4.5" fill="#c98f7c" /><path d="M15.200 15.500c0-4.500 6.600-4.500 6.600 0l-1-1.500h-4.600z" fill="#8d8280" /></ChromeMark> },
  { icon: <Glyph><path d="M1 15C1 8 8 4 15 6c5 1 8 5 7 9-1 3-4 1-5 2s1 4-4 5C7 23 1 20 1 15z" fill="#dfeaf3" /><circle cx="6" cy="14" r="2" fill="#f0a92c" /><circle cx="9" cy="9.5" r="2" fill="#4bb04f" /><circle cx="14" cy="9" r="2" fill="#e24334" /><circle cx="8" cy="18.5" r="2" fill="#3a7fd5" /><path d="m13 22.500 6-14" stroke="#c0762d" strokeWidth="2.2" /><path d="m18 9 2-8 4 1-3 8z" fill="#d9a871" /></Glyph> },
  { bg: "#3d4040", wide: true, icon: <ChromeMark><circle cx="18" cy="18.5" r="7.7" fill="#0a9aa6" /><text x="18" y="22" fontSize="10" fill="#fff" textAnchor="middle" fontFamily="Open Sans, sans-serif">P</text></ChromeMark> },
  { icon: <Glyph><rect width="24" height="24" rx="2" fill="#ff6200" /><path d="M3 4c3 2 6 1.500 9 2.500C15 7 18 5 21 3c-1 4-3 6-6 7 1 3 3 6 6 9-4-2-7-2-11-2-3 0-5 2-7 4 1-5 3-8 6-9-3-2-5-4-6-8z" fill="#fff" /><path d="m5 18 9-8" stroke="#ff6200" strokeWidth="1.2" /></Glyph> },
  { icon: <Glyph><ellipse cx="11.5" cy="12" rx="11" ry="6" fill="#9b9fa3" transform="rotate(-12 11.5 12)" /><ellipse cx="12.5" cy="8.5" rx="10.5" ry="6" fill="#f4f4f4" stroke="#d8373d" strokeWidth="1.6" transform="rotate(-10 12.5 8.5)" /><path d="m9 5 7 11M17 5l-4 10" stroke="#a2a6aa" strokeWidth="1.5" /><circle cx="14" cy="19.5" r="2.3" stroke="#3787d9" strokeWidth="1.8" /><circle cx="20" cy="17" r="2.5" stroke="#3787d9" strokeWidth="1.8" /></Glyph> },
];

function WindowsTaskbar() {
  return (
    <Taskbar>
      <Cell $w={48} $h={40}><Glyph $s={16} viewBox="0 0 16 16"><path d="M0 2.300 7 1.300v6.400H0zM8 1.200 16 0v7.700H8zM0 8.500h7v6.300l-7-1zM8 8.500h8V16l-8-1.200z" fill="#fff" /></Glyph></Cell>
      <SearchBox>
        <Glyph $s={17} viewBox="0 0 17 17" stroke="#222" strokeWidth="1.2"><circle cx="10.5" cy="6.5" r="5.5" /><path d="M6.500 10.500.5 16.500" /></Glyph>
        <Gap $w={11} />
        <Text $size={13.2} $color="#333">Pesquisar</Text>
        <Spacer />
        <Glyph $s={62} viewBox="0 0 62 62"><path d="M23 19c2.500 8 4 9.500 12 12-8 2.500-9.500 4-12 12-2.500-8-4-9.500-12-12 8-2.500 9.500-4 12-12z" fill="#fbc013" stroke="#fbc013" strokeWidth="1.5" strokeLinejoin="round" transform="translate(1 2) scale(.93)" /><path d="M45.500 29c1 4.500 2 5.500 6 6.500-4 1-5 2-6 6.500-1-4.500-2-5.500-6-6.500 4-1 5-2 6-6.500z" fill="#fbc013" /><path d="m3.500 36 2 1.800 2.500-.8-.8 3 1.800 2-3 .5-1.500 2.500-1.500-2.500-3-.8 2-1.900z" fill="#1aa0f0" /><circle cx="39.5" cy="20.5" r="2.2" fill="#f0592a" /><circle cx="57.5" cy="42" r="2" fill="#86c440" /></Glyph>
        <Gap $w={8} />
      </SearchBox>
      <Cell $w={48} $h={40}><Glyph $s={16} viewBox="0 0 16 16" stroke="#fff" strokeWidth="2.2"><circle cx="8" cy="8" r="6.6" /></Glyph></Cell>
      <Cell $w={48} $h={40}><Glyph $s={16} viewBox="0 0 16 16" stroke="#fff" strokeWidth="1.2"><path d="M.6 0v3h10.800V0M.6 5.500h10.800v5H.6zM.6 16v-3h10.800v3M14.500 0v3M14.500 9v7" /><path d="M13 4h3v3.500h-3z" fill="#fff" stroke="none" /></Glyph></Cell>
      <Gap $w={3} />
      {apps.map((a, i) => (
        <TaskItem key={i} $bg={a.bg}>
          <IconArea>{a.icon}</IconArea>
          <Underline $wide={a.wide} />
        </TaskItem>
      ))}
      <Gap $w={51} />
      <Glyph $s={26} viewBox="0 0 26 26"><path d="M6 22a5 5 0 0 1-1-9.500C6 7 14 6 16.500 11c4-.5 6 1 6.500 4 3 2 2 7-2 7z" fill="#bcd3f7" /><path d="M2 17c5 3 17 3 22 0 0 3-1 5-3 5H6c-2 0-4-2-4-5z" fill="#8fb3ee" /><circle cx="18.5" cy="6.5" r="6" fill="#c42b1c" /><text x="18.5" y="10" fontSize="9" fill="#fff" textAnchor="middle" fontFamily="Open Sans, sans-serif">1</text></Glyph>
      <Gap $w={7} />
      <Text $size={13.3}>24°C</Text>
      <Gap $w={9} />
      <Text $size={13.1}>Pred. nublado</Text>
      <Spacer />
      <Glyph $s={12} viewBox="0 0 12 12" stroke="#fff" strokeWidth="1.2"><path d="m0 8.500 6-6 6 6" /></Glyph>
      <Gap $w={11} />
      <Glyph $s={14} viewBox="0 0 14 14" stroke="#fff" strokeWidth="1.2"><rect x="1.5" y="3.5" width="7.5" height="7" rx="1.5" /><path d="m9 6 3.500-1.500v5L9 8M2.500 1c2-1.300 4-1.300 6 0M2.500 13c2 1.300 4 1.300 6 0" /></Glyph>
      <Gap $w={9} />
      <Glyph $s={16} viewBox="0 0 16 16" stroke="#fff" strokeWidth="1.1"><path d="M.5 5.800h2.500l3.500-3.300v11L3 10.200H.5zM8.500 6c1 1 1 3 0 4M10.500 4.200c2 2 2 5.600 0 7.600M12.700 2.500c3 3 3 8 0 11" /></Glyph>
      <Gap $w={13} />
      <Glyph $s={16} viewBox="0 0 16 16" stroke="#fff" strokeWidth="1.2"><path d="m5 11.500 7-9.500c1.500-1.500 3 0 2 1.500L7.500 13 4.500 14zM5 9C2 8.500 0 10.500 1 12.500s4 1 4-1M9.500 10c1.500-2 3 0 2 1s2 .5 3.500-1" /></Glyph>
      <Gap $w={5} />
      <Stack $w={40}><span>POR</span><span>PTB</span></Stack>
      <Stack $w={66} $ls={-0.25}><span>11:02</span><span>22/04/2025</span></Stack>
      <Gap $w={14} />
      <Glyph $s={24} viewBox="0 0 24 24"><path d="M0 3h16v12H9l-4 4v-4H0z" fill="#fff" /><path d="M3 6.500h10M3 9h10M3 11.500h7" stroke="#2b2b2a" /><circle cx="15.5" cy="17.5" r="7.5" fill="#3a3d3e" stroke="#85898a" /><text x="15.5" y="21.5" fontSize="11" fill="#fff" fontWeight="600" textAnchor="middle" fontFamily="Open Sans, sans-serif">3</text></Glyph>
      <Gap $w={17} />
    </Taskbar>
  );
}

export default function App() {
  return (
    <Screen>
      <Global />
      <BrowserChrome />
      <Header />
      <Body>
        <Sidebar />
        <AgentPanel />
        <Gutter />
        <PreviewPanel />
      </Body>
      <WindowsTaskbar />
    </Screen>
  );
}
